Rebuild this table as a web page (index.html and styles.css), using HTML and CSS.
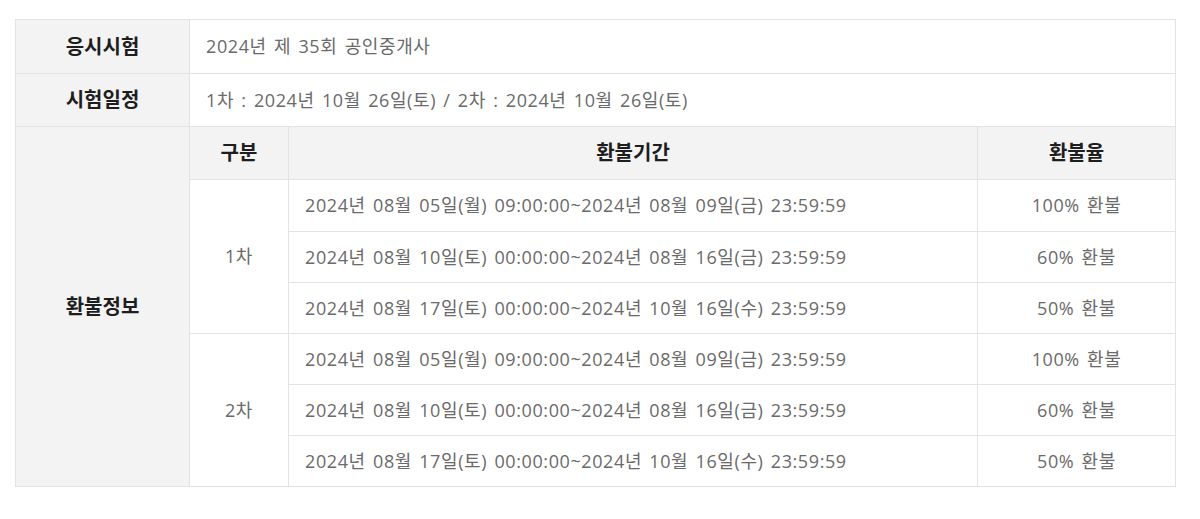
FILE: index.html
```html
<!DOCTYPE html>
<html lang="ko">
  <head>
    <meta charset="UTF-8" />
    <meta name="viewport" content="width=device-width, initial-scale=1.0" />
    <title>환불정보</title>
    <link rel="stylesheet" href="styles.css">
  </head>
  <body>
    <table class="exam-table">
      <colgroup>
        <col class="col-title" />
        <col class="col-round" />
        <col class="col-period" />
        <col class="col-rate" />
      </colgroup>
      <tr class="row-top">
        <th>응시시험</th>
        <td colspan="3">2024년 제 35회 공인중개사</td>
      </tr>
      <tr class="row-mid">
        <th>시험일정</th>
        <td colspan="3">1차 : 2024년 10월 26일(토) / 2차 : 2024년 10월 26일(토)</td>
      </tr>
      <tr class="row-mid">
        <th rowspan="7">환불정보</th>
        <th>구분</th>
        <th>환불기간</th>
        <th>환불율</th>
      </tr>
      <tr class="row-first">
        <td rowspan="3" class="center">1차</td>
        <td>2024년 08월 05일(월) 09:00:00~2024년 08월 09일(금) 23:59:59</td>
        <td class="center">100% 환불</td>
      </tr>
      <tr class="row">
        <td>2024년 08월 10일(토) 00:00:00~2024년 08월 16일(금) 23:59:59</td>
        <td class="center">60% 환불</td>
      </tr>
      <tr class="row">
        <td>2024년 08월 17일(토) 00:00:00~2024년 10월 16일(수) 23:59:59</td>
        <td class="center">50% 환불</td>
      </tr>
      <tr class="row">
        <td rowspan="3" class="center">2차</td>
        <td>2024년 08월 05일(월) 09:00:00~2024년 08월 09일(금) 23:59:59</td>
        <td class="center">100% 환불</td>
      </tr>
      <tr class="row">
        <td>2024년 08월 10일(토) 00:00:00~2024년 08월 16일(금) 23:59:59</td>
        <td class="center">60% 환불</td>
      </tr>
      <tr class="row">
        <td>2024년 08월 17일(토) 00:00:00~2024년 10월 16일(수) 23:59:59</td>
        <td class="center">50% 환불</td>
      </tr>
    </table>
  </body>
</html>
```

FILE: styles.css
```css
body {
  margin: 0;
  padding: 19px 0 0 15px;
  background-color: #ffffff;
  font-family: "Open Sans", "Noto Sans CJK KR", sans-serif;
}

.exam-table {
  width: 1160px;
  table-layout: fixed;
  border-collapse: collapse;
  border: 1px solid #e3e3e3;
}

.col-title {
  width: 174px;
}

.col-round {
  width: 99px;
}

.col-period {
  width: 689px;
}

.col-rate {
  width: 198px;
}

.exam-table th,
.exam-table td {
  border: 1px solid #e3e3e3;
  padding: 0 16px 3px;
  vertical-align: middle;
}

.exam-table th {
  background-color: #f3f3f3;
  color: #1e1e1e;
  font-family: "Noto Sans CJK KR", sans-serif;
  font-size: 20px;
  font-weight: bold;
  text-align: center;
}

.exam-table td {
  color: #6a6a6a;
  font-size: 18px;
  letter-spacing: 0.6px;
  word-spacing: 2px;
  text-align: left;
}

.exam-table td.center {
  text-align: center;
}

.row-top {
  height: 54px;
}

.row-mid {
  height: 53px;
}

.row-first {
  height: 52px;
}

.row {
  height: 51px;
}
```
